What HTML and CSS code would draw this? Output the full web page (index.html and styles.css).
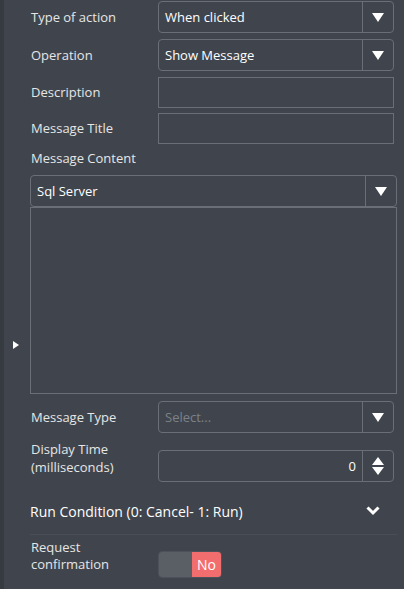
FILE: index.html
```html
<!DOCTYPE html>
<html lang="en">
  <head>
    <meta charset="UTF-8" />
    <meta name="viewport" content="width=device-width, initial-scale=1" />
    <title>Action Settings</title>
    <link rel="stylesheet" href="styles.css">
  </head>
  <body>
    <div class="panel">
      <div class="handle">
        <svg width="6" height="8" viewBox="0 0 6 8"><path d="M0 0 L6 4 L0 8 Z" fill="#fff"/></svg>
      </div>
      <div class="form">
        <div class="row">
          <label>Type of action</label>
          <div class="select">
            <span class="value">When clicked</span>
            <span class="arrow"><svg width="12" height="9" viewBox="0 0 12 9"><path d="M0 0 H12 L6 9 Z" fill="#fff"/></svg></span>
          </div>
        </div>
        <div class="row">
          <label>Operation</label>
          <div class="select">
            <span class="value">Show Message</span>
            <span class="arrow"><svg width="12" height="9" viewBox="0 0 12 9"><path d="M0 0 H12 L6 9 Z" fill="#fff"/></svg></span>
          </div>
        </div>
        <div class="row">
          <label>Description</label>
          <div class="input"></div>
        </div>
        <div class="row">
          <label>Message Title</label>
          <div class="input"></div>
        </div>
        <div class="block-label">Message Content</div>
        <div class="select wide">
          <span class="value">Sql Server</span>
          <span class="arrow"><svg width="12" height="9" viewBox="0 0 12 9"><path d="M0 0 H12 L6 9 Z" fill="#fff"/></svg></span>
        </div>
        <div class="editor"></div>
        <div class="row">
          <label>Message Type</label>
          <div class="select">
            <span class="value placeholder">Select...</span>
            <span class="arrow"><svg width="12" height="9" viewBox="0 0 12 9"><path d="M0 0 H12 L6 9 Z" fill="#fff"/></svg></span>
          </div>
        </div>
        <div class="row tall">
          <label>Display Time<br>(milliseconds)</label>
          <div class="select number">
            <span class="value">0</span>
            <span class="arrow"><svg width="12" height="18" viewBox="0 0 12 18"><path d="M6 0 L12 8 H0 Z M0 10 H12 L6 18 Z" fill="#fff"/></svg></span>
          </div>
        </div>
        <div class="section">
          <span>Run Condition (0: Cancel- 1: Run)</span>
          <svg width="14" height="10" viewBox="0 0 14 10"><path d="M1.5 1.5 L7 7 L12.5 1.5" fill="none" stroke="#fff" stroke-width="3"/></svg>
        </div>
        <div class="row confirm">
          <label>Request<br>confirmation</label>
          <div class="toggle">
            <span class="off"></span>
            <span class="no">No</span>
          </div>
        </div>
      </div>
    </div>
  </body>
</html>
```
FILE: styles.css
```css
body {
  margin: 0;  background-color: #40454d;  font-family: 'Open Sans', 'Noto Sans', sans-serif;  font-size: 13px;  color: #e6e6e6;
}
.panel {
  display: flex;  min-height: 589px;  border-left: 4px solid #363a41;  box-sizing: border-box;
}
.handle {
  width: 26px;  display: flex;  align-items: center;  justify-content: center;  padding-top: 100px;
}
.handle svg {
  margin-left: -3px;
}
.form {
  flex: 1;  padding: 1px 7px 0 0;
}
.row {
  display: flex;  align-items: center;  margin-bottom: 6px;
}
.row label {
  width: 127px;  padding-left: 1px;  line-height: 18px;
}
.select, .input {
  width: 236px;  height: 32px;  box-sizing: border-box;  border: 1px solid #6a6f77;  border-radius: 4px;  display: flex;  align-items: center;
}
.input {
  height: 31px;  border-radius: 0;  margin-bottom: -1px;
}
.select .value {
  flex: 1;  padding-left: 6px;  color: #fff;
}
.select .placeholder {
  color: #7c8188;
}
.select .arrow {
  width: 30px;  height: 100%;  border-left: 1px solid #6a6f77;  display: flex;  align-items: center;  justify-content: center;
}
.number .value {
  text-align: right;  padding-right: 6px;
}
.block-label {
  padding-left: 1px;  margin-top: 1px;  height: 26px;  line-height: 18px;
}
.select.wide {
  width: 367px;  margin-left: 0;
}
.editor {
  width: 367px;  height: 187px;  box-sizing: border-box;  border: 1px solid #6a6f77;  margin-bottom: 7px;
}
.row.tall {
  margin-bottom: 10px;  margin-top: 17px;
}
.row.tall label {
  margin-top: -16px;
}
.section {
  display: flex;  align-items: center;  justify-content: space-between;  width: 367px;  height: 43px;  border-bottom: 1px solid #4a4f57;  font-size: 14px;  color: #fff;  box-sizing: border-box;  padding: 0 17px 4px 0;
}
.row.confirm {
  margin-top: 16px;
}
.row.confirm label {
  margin-top: -17px;  line-height: 17px;
}
.toggle {
  display: flex;  width: 64px;  height: 27px;  border: 1px solid #4d525a;  border-radius: 4px;  overflow: hidden;  box-sizing: border-box;
}
.toggle .off {
  width: 33px;  background-color: #5a5f66;
}
.toggle .no {
  flex: 1;  background-color: #f26d6d;  color: #fff;  display: flex;  align-items: center;  justify-content: center;  font-size: 14px;
}
```
